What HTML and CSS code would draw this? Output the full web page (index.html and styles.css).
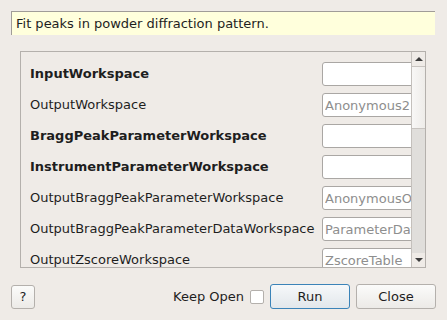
FILE: index.html
```html
<!DOCTYPE html>
<html lang="en">
  <head>
    <meta charset="UTF-8" />
    <title>FitPowderDiffPeaks</title>
    <link rel="stylesheet" href="styles.css">
  </head>
  <body>
    <div class="dialog">
      <div class="desc">Fit peaks in powder diffraction pattern.</div>

      <div class="panel">
        <div class="rows">
          <div class="row">
            <span class="label req">InputWorkspace</span>
            <input type="text" value="" />
          </div>
          <div class="row">
            <span class="label">OutputWorkspace</span>
            <input type="text" placeholder="Anonymous2" />
          </div>
          <div class="row">
            <span class="label req">BraggPeakParameterWorkspace</span>
            <input type="text" value="" />
          </div>
          <div class="row">
            <span class="label req">InstrumentParameterWorkspace</span>
            <input type="text" value="" />
          </div>
          <div class="row">
            <span class="label">OutputBraggPeakParameterWorkspace</span>
            <input type="text" placeholder="AnonymousOut" />
          </div>
          <div class="row">
            <span class="label">OutputBraggPeakParameterDataWorkspace</span>
            <input type="text" placeholder="ParameterData" />
          </div>
          <div class="row">
            <span class="label">OutputZscoreWorkspace</span>
            <input type="text" placeholder="ZscoreTable" />
          </div>
        </div>
        <div class="scrollbar">
          <div class="arrow up"></div>
          <div class="thumb"></div>
          <div class="trough"></div>
          <div class="arrow down"></div>
        </div>
      </div>

      <div class="buttons">
        <button class="btn help">?</button>
        <div class="spacer"></div>
        <label class="keep">Keep Open <span class="check"></span></label>
        <button class="btn run">Run</button>
        <button class="btn close">Close</button>
      </div>
    </div>
  </body>
</html>
```

FILE: styles.css
```css
body {
  margin: 0;
  background: #efebe7;
  font-family: 'DejaVu Sans', sans-serif;
  font-size: 13px;
  color: #1e1e1e;
}

.dialog {
  width: 447px;
  height: 320px;
  box-sizing: border-box;
  padding: 11px 11px 0 11px;
}

.desc {
  height: 24px;
  line-height: 23px;
  box-sizing: border-box;
  background: #ffffdc;
  border-top: 1px solid #a09c98;
  border-left: 1px solid #a09c98;
  padding-left: 4px;
  margin-right: 1px;
}

.panel {
  display: flex;
  margin: 16px 10px 0 9px;
  height: 217px;
  border: 1px solid #b4b0ac;
  box-sizing: border-box;
}

.rows {
  flex: 1;
  overflow: hidden;
  padding: 10px 0 0 9px;
}

.row {
  display: grid;
  grid-template-columns: 292px 100px;
  align-items: center;
  height: 24px;
  margin-bottom: 7px;
}

.label {
  white-space: nowrap;
  padding-bottom: 1px;
}

.req {
  font-weight: bold;
}

.row input {
  height: 24px;
  box-sizing: border-box;
  border: 1px solid #aaa7a4;
  border-radius: 3px;
  background: #fff;
  font-family: 'DejaVu Sans', sans-serif;
  font-size: 13px;
  padding: 0 2px;
  outline: none;
}

.row input::placeholder {
  color: #8e8e8e;
}

.scrollbar {
  width: 13px;
  display: flex;
  flex-direction: column;
  border-left: 1px solid #c4c0bc;
}

.arrow {
  height: 14px;
  background: #efebe7;
  display: flex;
  justify-content: center;
  align-items: center;
}

.arrow::after {
  content: '';
  border-left: 4px solid transparent;
  border-right: 4px solid transparent;
}

.up::after {
  border-bottom: 4px solid #3c3c3c;
}

.down::after {
  border-top: 4px solid #3c3c3c;
}

.thumb {
  height: 61px;
  background: linear-gradient(to right, #f8f7f6, #eeece9);
  border-top: 1px solid #c8c4c0;
  border-bottom: 1px solid #c8c4c0;
}

.trough {
  flex: 1;
  background: #e0dedb;
}

.buttons {
  display: flex;
  align-items: center;
  margin-top: 16px;
}

.spacer {
  flex: 1;
}

.btn {
  height: 25px;
  box-sizing: border-box;
  border: 1px solid #b4b0ac;
  border-radius: 3px;
  background: linear-gradient(#fbfbfa, #eceae7);
  font-family: 'DejaVu Sans', sans-serif;
  font-size: 13px;
  color: #1e1e1e;
  padding: 0;
}

.help {
  width: 24px;
  height: 24px;
}

.keep {
  display: flex;
  align-items: center;
  gap: 6px;
  margin-right: 6px;
}

.check {
  width: 14px;
  height: 14px;
  box-sizing: border-box;
  border: 1px solid #b4b0ac;
  background: #fff;
  border-radius: 2px;
}

.run {
  width: 80px;
  border-color: #3b83b8;
  background: linear-gradient(#f6f8fa, #e2e7eb);
  margin-right: 6px;
}

.close {
  width: 80px;
}
```
